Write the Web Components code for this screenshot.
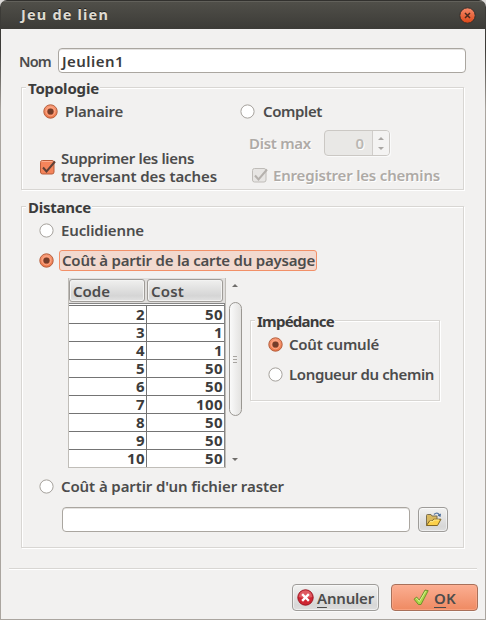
<!DOCTYPE html>
<html lang="fr">
<head>
<meta charset="utf-8">
<title>Jeu de lien</title>
<style>
html,body{margin:0;height:100%;overflow:hidden;background:#dcdad8}
body{font:600 15px/18px "Noto Sans","Open Sans",sans-serif;color:#4c4c4c}
.name{display:flex;align-items:center;height:25px;margin:19px 0 0 18px;gap:7px}
.topo{display:grid;grid-template-columns:218px 1fr;align-items:start}
.col{display:flex;flex-direction:column;align-items:flex-start}
.lines{display:flex;flex-direction:column}
.dist{display:flex;align-items:center;height:26px;margin:9px 0 0 9px;gap:13px;color:#aeaaa6;text-shadow:1px 1px #fff}
.mid{display:flex;align-items:flex-start;margin:8px 0 0 46px;height:189px}
.file{display:flex;gap:8px;margin:11px 0 0 40px}
.actions{display:flex;gap:12px;margin:15px 0 0 291px}
.rule{height:1px;margin:20px 8px 0;background:#d8d6d3;box-shadow:0 1px #fff}
</style>
</head>
<body>
<dialog-window>
  <fit-text slot="title" w="88">Jeu de lien</fit-text>
  <div class="name"><fit-text w="32" style="font-size:14.5px">Nom</fit-text><text-field style="width:408px"><fit-text w="62">Jeulien1</fit-text></text-field></div>
  <group-box style="width:443px;height:103px;margin:14px 0 0 20px">
    <fit-text slot="legend" w="71">Topologie</fit-text>
    <div class="topo">
      <div class="col">
        <choice-item kind="radio" checked style="margin:13px 0 0 21px"><fit-text w="58">Planaire</fit-text></choice-item>
        <choice-item kind="check" checked style="height:36px;margin:28px 0 0 18px;--gap:5px"><div class="lines"><fit-text w="133">Supprimer les liens</fit-text><fit-text w="156">traversant des taches</fit-text></div></choice-item>
      </div>
      <div class="col">
        <choice-item kind="radio" style="margin-top:13px;--gap:8px"><fit-text w="59">Complet</fit-text></choice-item>
        <div class="dist"><fit-text w="62">Dist max</fit-text><spin-box>0</spin-box></div>
        <choice-item kind="check" checked disabled style="margin:9px 0 0 12px;--gap:5px"><fit-text w="167">Enregistrer les chemins</fit-text></choice-item>
      </div>
    </div>
  </group-box>
  <group-box style="width:443px;height:342px;margin:16px 0 0 20px">
    <fit-text slot="legend" w="63">Distance</fit-text>
    <choice-item kind="radio" style="margin:13px 0 0 17px"><fit-text w="83">Euclidienne</fit-text></choice-item>
    <choice-item kind="radio" checked focused style="margin:10px 0 0 17px;--gap:5px"><fit-text w="253">Coût à partir de la carte du paysage</fit-text></choice-item>
    <div class="mid">
      <cost-table></cost-table>
      <scroll-bar></scroll-bar>
      <group-box style="width:190px;height:81px;margin:42px 0 0 7px;--gap-x:4px">
        <fit-text slot="legend" w="77">Impédance</fit-text>
        <choice-item kind="radio" checked style="margin:13px 0 0 17px;--gap:6px"><fit-text w="90">Coût cumulé</fit-text></choice-item>
        <choice-item kind="radio" style="margin:10px 0 0 17px;--gap:6px"><fit-text w="145">Longueur du chemin</fit-text></choice-item>
      </group-box>
    </div>
    <choice-item kind="radio" style="margin:9px 0 0 17px"><fit-text w="223">Coût à partir d'un fichier raster</fit-text></choice-item>
    <div class="file">
      <text-field style="width:348px"></text-field>
      <push-button style="width:30px;height:25px">
        <svg width="18" height="16" viewBox="0 0 18 16"><path d="M2.500 13.500V3.500q0-1 1-1H7l1 1.500h5v3" fill="#d9b95f" stroke="#7a6f52"/><path d="M2.500 13.500 5.500 9h3l1-1.800h7.500l-3.500 6.300z" fill="#fbd04a" stroke="#806625"/><path d="M6 9.600h3l1-1.600h5" fill="none" stroke="#ffe98d"/><path d="M10 2.500Q13-.5 15.500 3" fill="none" stroke="#5d7ca5" stroke-width="1.300"/><path d="M13.500 3.500 17 1.500 16.500 5z" fill="#466998"/></svg>
      </push-button>
    </div>
  </group-box>
  <div class="rule"></div>
  <div class="actions">
    <push-button style="width:87px;height:27px">
      <svg width="17" height="17" viewBox="0 0 17 17"><circle cx="8.500" cy="8.500" r="7.700" fill="#cf2532" stroke="#9b1420"/><path d="M1.700 8A6.800 6.800 0 0 1 15.300 8Q8.500 10 1.700 8z" fill="#e8777b" opacity=".65"/><path d="m6 6 5 5m0-5-5 5" stroke="#fff" stroke-width="2.400" stroke-linecap="square"/></svg>
      <fit-text w="57" key>Annuler</fit-text>
    </push-button>
    <push-button primary style="width:87px;height:27px;--gap:5px">
      <svg width="16" height="17" viewBox="0 0 16 17"><path d="M1 10.200 3.700 8l2.600 3.200L12 1l3.200.7L8 15.500H5.400z" fill="#a9d645" stroke="#5b8524" stroke-width=".8" stroke-linejoin="round"/><path d="m2.800 10 1-.6 2.500 3.200L12.600 2.200" fill="none" stroke="#d8ef92"/></svg>
      <fit-text w="22" key>OK</fit-text>
    </push-button>
  </div>
</dialog-window>
<script>
const define = (name, html, setup) => customElements.define(name, class extends HTMLElement {
  connectedCallback() {
    if (this.shadowRoot) return;
    const root = this.attachShadow({mode: 'open'});
    const t = document.createElement('template');
    t.innerHTML = html;
    root.append(t.content.cloneNode(true));
    if (setup) setup(this, root);
  }
});

define('dialog-window', `<style>
:host{display:flex;flex-direction:column;box-sizing:border-box;width:486px;height:620px;background:#f2f1f0;border:1px solid #aaa7a2;border-top:0;overflow:hidden;border-image:linear-gradient(#3c3b37 0 50px,#aaa59f 110px) 1;clip-path:inset(0 round 7px 7px 0 0)}
header{display:flex;align-items:center;justify-content:space-between;flex:none;box-sizing:border-box;height:29px;padding:0 9px 1px 20px;background:linear-gradient(#32312e 0 1px,#62615b 1px 2px,#504f49 2px,#3c3b37);color:#dfdbd2;font-weight:700;font-size:14.5px;text-shadow:0 -1px #222}
svg{display:block;margin-top:3px}
</style><header><slot name="title"></slot><svg width="17" height="17" viewBox="0 0 17 17"><defs><linearGradient id="g" x2="0" y2="1"><stop stop-color="#f78b6b"/><stop offset="1" stop-color="#dc4617"/></linearGradient></defs><circle cx="8.500" cy="8.500" r="7.700" fill="url(#g)" stroke="#35302c"/><path d="m6 6 5 5m0-5-5 5" stroke="#4a291d" stroke-width="1.500"/></svg></header><slot></slot>`);

define('group-box', `<style>
:host{display:block;box-sizing:border-box;flex:none;border:1px solid #d8d6d3;box-shadow:1px 1px #fff,inset 1px 1px #fff}
.l{display:flex;align-items:center;height:0;font-weight:700;color:#3c3c3c}
.l span{background:#f2f1f0;padding:0 1px 0 2px;margin-left:var(--gap-x,4px)}
</style><div class="l"><span><slot name="legend"></slot></span></div><slot></slot>`);

define('text-field', `<style>
:host{display:flex;align-items:center;box-sizing:border-box;height:25px;padding-left:3px;background:#fff;border:1px solid #aaa6a0;border-radius:4px;box-shadow:inset 0 1px #e5e3e1;color:#3c3c3c}
</style><slot></slot>`);

define('spin-box', `<style>
:host{display:flex;box-sizing:border-box;width:66px;height:26px;border:1px solid #cbc8c4;border-radius:4px;background:#e9e8e6;overflow:hidden;box-shadow:1px 1px #fafafa;color:#bab7b3}
span{flex:1;text-align:right;padding-right:8px;line-height:24px}
div{width:16px;background:#f4f3f2;border-left:1px solid #d0cdca;display:flex;flex-direction:column;align-items:center;justify-content:center;gap:7px}
i{border:3px solid transparent;border-top:0;border-bottom:3px solid #aaa7a4}
i+i{border-top:3px solid #aaa7a4;border-bottom:0}
</style><span><slot></slot></span><div><i></i><i></i></div>`);

define('choice-item', `<style>
:host{display:flex;align-items:center;width:max-content;height:20px;gap:var(--gap,7px)}
:host([disabled]){color:#aeaaa6;text-shadow:1px 1px #fff}
svg{display:block;flex:none}
:host([focused]) span{display:block;box-sizing:border-box;height:21px;width:258px;padding:0 2px;background:#f2d9cf;border:1px solid #f29068;border-radius:3px;line-height:18px}
</style><svg></svg><span><slot></slot></span>`, (el, root) => {
  const on = el.hasAttribute('checked'), off = el.hasAttribute('disabled');
  const svg = root.querySelector('svg');
  if (el.getAttribute('kind') === 'radio') {
    svg.setAttribute('width', 15); svg.setAttribute('height', 15);
    svg.innerHTML = on
      ? '<defs><linearGradient id="g" x2="0" y2="1"><stop stop-color="#f89b78"/><stop offset="1" stop-color="#ee7747"/></linearGradient></defs><circle cx="7.500" cy="7.500" r="6.700" fill="url(#g)" stroke="#b45f3e"/><circle cx="7.500" cy="7.500" r="4.300" fill="none" stroke="#fba98a"/><circle cx="7.500" cy="7.500" r="3.100" fill="#743d2a"/>'
      : '<circle cx="7.500" cy="7.500" r="6.600" fill="#fff" stroke="#a5a19c"/>';
  } else {
    svg.setAttribute('width', 16); svg.setAttribute('height', 15);
    svg.innerHTML = off
      ? '<rect x=".5" y=".5" width="13.500" height="13.500" rx="2" fill="#e7e5e3" stroke="#bfbcb8"/><path d="m3 7.500 3.500 4L15 1.500" fill="none" stroke="#b5b1ad" stroke-width="2"/>'
      : '<rect x=".5" y=".5" width="13.500" height="13.500" rx="2" fill="#f4845b" stroke="#b85d3a"/><path d="M1.500 1.500h11" stroke="#fbac8e"/><path d="m3 7.500 3.500 4L15 1.500" fill="none" stroke="#5e4036" stroke-width="2"/>';
  }
});

define('cost-table', `<style>
:host{display:block;box-sizing:border-box;width:158px;height:190px;background:#e0dedc;color:#3c3c3c;border:1px solid #c0bdb8;border-width:0 1px 1px;flex:none}
header{display:flex;gap:2px;padding:1px 0 0;height:25px;box-sizing:border-box;color:#4c4c4c}
header b{display:flex;align-items:center;box-sizing:border-box;width:76px;height:23px;padding-left:3px;border:1px solid #9f9c98;border-radius:3px;background:linear-gradient(#f0f0ef,#d5d5d5 75%,#e2e2e2);box-shadow:inset 0 0 0 1px #f3f3f2;font-weight:600}
.rows{background:#fff;border-top:1px solid #858585;border-right:1px solid #858585;padding-top:1px}
.rows div{display:grid;grid-template-columns:78px 77px;border-top:1px solid #747474;height:17px;line-height:17px;font-weight:700}
.rows span{display:flex;justify-content:flex-end;align-items:center;height:17px;padding-right:1px;letter-spacing:.4px}
.rows span:first-child{border-right:1px solid #747474}
</style><header><b><fit-text w="37">Code</fit-text></b><b><fit-text w="33">Cost</fit-text></b></header><div class="rows"></div>`, (el, root) => {
  const values = [50, 1, 1, 50, 50, 100, 50, 50, 50];
  root.querySelector('.rows').innerHTML = values.map((v, i) => `<div><span>${i + 2}</span><span>${v}</span></div>`).join('');
});

define('scroll-bar', `<style>
:host{display:flex;flex-direction:column;align-items:center;width:16px;height:189px;margin-left:1px;box-sizing:border-box;padding:6px 0 5px;flex:none}
i{border:3px solid transparent;border-top:0;border-bottom:3px solid #6f6d6a}
i+div+i{border-top:3px solid #6f6d6a;border-bottom:0}
div{margin:15px 0 42px;width:13px;height:114px;box-sizing:border-box;border:1px solid #9a9792;border-radius:7px;background:linear-gradient(90deg,#fafafa,#e3e2e0);display:flex;flex-direction:column;gap:2px;align-items:center;justify-content:center}
u{width:4px;height:1px;background:#a7a4a0}
</style><i></i><div><u></u><u></u><u></u></div><i></i>`);

define('push-button', `<style>
:host{display:flex;align-items:center;justify-content:center;gap:var(--gap,3px);box-sizing:border-box;border:1px solid #9e9c99;border-radius:4px;background:linear-gradient(#f2f2f1,#d7d7d7 80%,#dedede);box-shadow:inset 0 0 0 1px rgba(255,255,255,.5),0 1px #fafafa;color:#4c4c4c}
:host([primary]){background:linear-gradient(#fbae92,#ef8a62);border-color:#a8705a;box-shadow:inset 0 0 0 1px rgba(255,180,150,.5),0 1px #fafafa}
</style><slot></slot>`);

/* Spreads its text over the advance width given by w; "key" underlines the mnemonic letter. */
define('fit-text', `<style>
:host{display:block;white-space:nowrap}
span{display:inline-block}
:host([key]) span::first-letter{text-decoration:underline;text-underline-offset:3px;text-decoration-thickness:1px}
</style><span><slot></slot></span>`, (el, root) => {
  const span = root.querySelector('span');
  const w = +el.getAttribute('w');
  if (el.hasAttribute('key')) span.textContent = el.textContent;
  const fit = () => {
    span.style.letterSpacing = '0';
    span.style.letterSpacing = (w - span.getBoundingClientRect().width) / el.textContent.length + 'px';
  };
  fit();
  addEventListener('load', fit);
});
</script>
</body>
</html>
